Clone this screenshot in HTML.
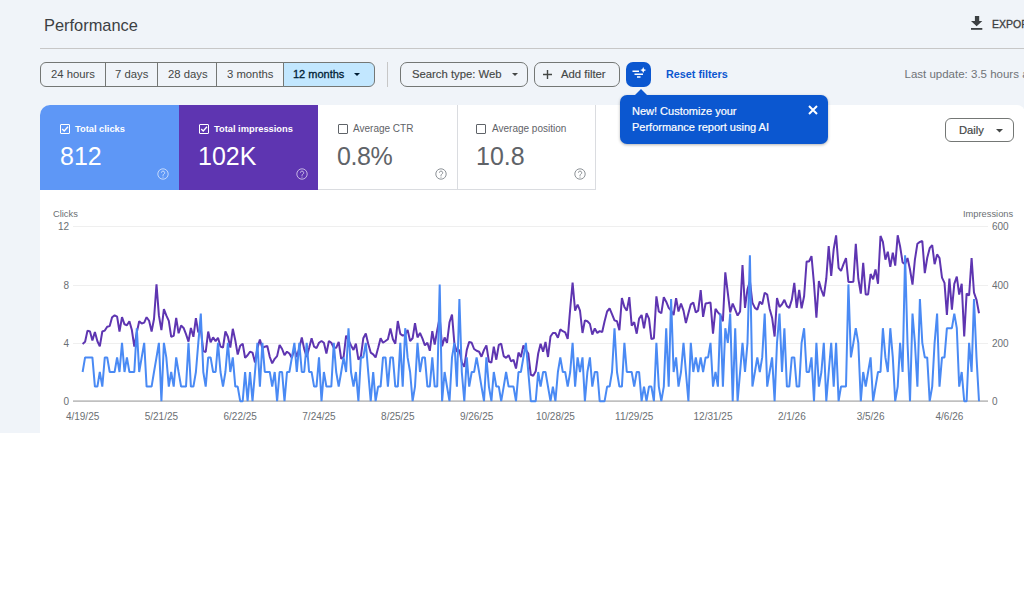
<!DOCTYPE html>
<html><head><meta charset="utf-8">
<style>
*{box-sizing:border-box;margin:0;padding:0}
html,body{width:1024px;height:589px;overflow:hidden;background:#fff;font-family:"Liberation Sans",sans-serif}
.abs{position:absolute}
#bg{position:absolute;left:0;top:0;width:1024px;height:433px;background:#f0f4f9}
#title{left:44px;top:14.5px;font-size:16.4px;color:#3c4043;line-height:20px;white-space:nowrap}
#hr{left:40px;top:48px;width:984px;height:1px;background:#c7c7c7}
#exp{left:992px;top:18.7px;font-size:10.5px;font-weight:normal;-webkit-text-stroke:0.3px #3c4043;color:#3c4043;letter-spacing:0px;white-space:nowrap;line-height:10px}
.seg{position:absolute;top:62px;height:25px;border:1px solid #747775;display:flex;align-items:center;padding-bottom:1px;font-size:11.3px;color:#444746;white-space:nowrap}
.btn{position:absolute;top:62px;height:25px;border:1px solid #747775;border-radius:7px;font-size:11.3px;color:#444746;-webkit-text-stroke:0.15px #444746;white-space:nowrap;line-height:23px}
#panel{left:40px;top:105px;width:985px;height:328px;background:#fff;border-radius:10px 8px 0 0}
.card{position:absolute;top:105px;height:85px;width:139px}
.card .lab{position:absolute;left:35px;top:18px;font-size:9.3px;font-weight:bold;white-space:nowrap;line-height:12px}
.card .val{position:absolute;left:19px;top:36px;font-size:25px;white-space:nowrap;line-height:30px}
.card .cb{position:absolute;left:20px;top:19px;width:10px;height:10px;border:1px solid #fff;border-radius:1px}
.card .help{position:absolute;left:117px;top:63px;width:12px;height:12px}
#tip{left:620px;top:95px;width:208px;height:49px;background:#0b57d0;border-radius:7px;box-shadow:0 1px 3px rgba(0,0,0,.3)}
#tiptext{left:632px;top:104px;font-size:11px;color:#fff;-webkit-text-stroke:0.2px #fff;line-height:15.5px;white-space:nowrap}
#daily{left:945px;top:117.5px;width:69px;height:24px;border:1px solid #747775;border-radius:6px;background:#fff;font-size:11.2px;color:#444746;-webkit-text-stroke:0.2px #444746;line-height:22px}
.ax{position:absolute;font-size:10px;color:#6b6f73;white-space:nowrap;line-height:10px}
</style></head><body>
<div id="bg"></div>
<div id="title" class="abs">Performance</div>
<div id="hr" class="abs"></div>
<svg class="abs" style="left:970px;top:15px" width="14" height="16" viewBox="0 0 14 16"><path d="M4.9 1h4.3v5h3.1L6.65 11.3 1 6h3.9z" fill="#3c4043"/><rect x="1" y="13" width="11.3" height="1.8" fill="#3c4043"/></svg>
<div id="exp" class="abs">EXPORT</div>

<div class="seg" style="left:40px;width:66px;border-radius:6px 0 0 6px;padding-left:10px">24 hours</div>
<div class="seg" style="left:105px;width:53px;border-left:1px solid #747775;padding-left:9px">7 days</div>
<div class="seg" style="left:157px;width:60px;padding-left:10px">28 days</div>
<div class="seg" style="left:216px;width:68px;padding-left:10px">3 months</div>
<div class="seg" style="left:283px;width:92px;border-radius:0 6px 6px 0;background:#c2e7ff;padding-left:9px;color:#001d35;font-size:11px;-webkit-text-stroke:0.3px #001d35">12 months<svg style="position:absolute;left:70px;top:10px" width="6" height="4"><path d="M0 0h6L3 3z" fill="#001d35"/></svg></div>
<div class="abs" style="left:387px;top:62px;width:1px;height:25px;background:#c7c7c7"></div>

<div class="btn" style="left:400px;width:128px;padding-left:11px">Search type: Web<svg style="position:absolute;left:111px;top:10px" width="6" height="4"><path d="M0 0h6L3 3z" fill="#444746"/></svg></div>
<div class="btn" style="left:534px;width:86px;padding-left:26px">Add filter<svg style="position:absolute;left:8px;top:7px" width="9" height="9"><path d="M3.8 0h1.4v3.8H9v1.4H5.2V9H3.8V5.2H0V3.8h3.8z" fill="#444746"/></svg></div>
<div class="abs" style="left:626px;top:62px;width:25px;height:25px;background:#0b57d0;border-radius:7px"><svg style="position:absolute;left:0;top:0" width="25" height="25" viewBox="0 0 25 25"><path d="M6.5 9.3h6.5M8.5 12.2h8.5M11 15.1h3.5" stroke="#fff" stroke-width="1.5"/><path d="M17.2 5.1l.95 2.05 2.05.95-2.05.95-.95 2.05-.95-2.05-2.05-.95 2.05-.95z" fill="#fff"/></svg></div>
<div class="abs" style="left:666px;top:68px;font-size:10.8px;font-weight:bold;color:#0b57d0;white-space:nowrap;line-height:13px">Reset filters</div>
<div class="abs" style="left:904.5px;top:66.5px;font-size:11.5px;color:#6f7377;white-space:nowrap;line-height:14px">Last update: 3.5 hours ago</div>

<div id="panel" class="abs"></div>
<div class="card" style="left:40px;background:#5e97f6;border-radius:10px 0 0 0;color:#fff">
 <div class="cb"><svg width="8" height="8" style="position:absolute;left:0;top:0"><path d="M1.2 4l2 2L7 1.8" stroke="#fff" stroke-width="1.3" fill="none"/></svg></div>
 <div class="lab">Total clicks</div><div class="val" style="left:20px">812</div>
 <svg class="help" viewBox="0 0 12 12"><circle cx="6" cy="6" r="5.2" stroke="rgba(255,255,255,.7)" fill="none" stroke-width="0.9"/><path d="M4.4 4.7a1.65 1.65 0 1 1 2.4 1.5c-.5.3-.8.6-.8 1.3v.5" stroke="rgba(255,255,255,.7)" fill="none" stroke-width="0.9"/><circle cx="6" cy="9.1" r=".55" fill="rgba(255,255,255,.7)"/></svg>
</div>
<div class="card" style="left:179px;background:#5e35b1;color:#fff">
 <div class="cb"><svg width="8" height="8" style="position:absolute;left:0;top:0"><path d="M1.2 4l2 2L7 1.8" stroke="#fff" stroke-width="1.3" fill="none"/></svg></div>
 <div class="lab">Total impressions</div><div class="val">102K</div>
 <svg class="help" viewBox="0 0 12 12"><circle cx="6" cy="6" r="5.2" stroke="rgba(255,255,255,.7)" fill="none" stroke-width="0.9"/><path d="M4.4 4.7a1.65 1.65 0 1 1 2.4 1.5c-.5.3-.8.6-.8 1.3v.5" stroke="rgba(255,255,255,.7)" fill="none" stroke-width="0.9"/><circle cx="6" cy="9.1" r=".55" fill="rgba(255,255,255,.7)"/></svg>
</div>
<div class="card" style="left:318px;border-bottom:1px solid #dadce0;color:#5f6368">
 <div class="cb" style="border-color:#5f6368"></div>
 <div class="lab" style="font-weight:normal;font-size:10px">Average CTR</div><div class="val" style="letter-spacing:-0.4px">0.8%</div>
 <svg class="help" viewBox="0 0 12 12"><circle cx="6" cy="6" r="5.2" stroke="#80868b" fill="none" stroke-width="0.9"/><path d="M4.4 4.7a1.65 1.65 0 1 1 2.4 1.5c-.5.3-.8.6-.8 1.3v.5" stroke="#80868b" fill="none" stroke-width="0.9"/><circle cx="6" cy="9.1" r=".55" fill="#80868b"/></svg>
</div>
<div class="card" style="left:457px;border-left:1px solid #dadce0;border-right:1px solid #dadce0;border-bottom:1px solid #dadce0;color:#5f6368">
 <div class="cb" style="border-color:#5f6368;left:18px"></div>
 <div class="lab" style="font-weight:normal;left:34px;font-size:10px">Average position</div><div class="val" style="left:18px">10.8</div>
 <svg class="help" viewBox="0 0 12 12" style="left:116px"><circle cx="6" cy="6" r="5.2" stroke="#80868b" fill="none" stroke-width="0.9"/><path d="M4.4 4.7a1.65 1.65 0 1 1 2.4 1.5c-.5.3-.8.6-.8 1.3v.5" stroke="#80868b" fill="none" stroke-width="0.9"/><circle cx="6" cy="9.1" r=".55" fill="#80868b"/></svg>
</div>

<div id="daily" class="abs"><span style="position:absolute;left:13px;top:0">Daily</span><svg style="position:absolute;left:50px;top:10px" width="7" height="4"><path d="M0 0h7L3.5 3.5z" fill="#444746"/></svg></div>

<div id="tip" class="abs"></div>
<svg class="abs" style="left:633px;top:89px" width="16" height="8"><path d="M0 8L8 0l8 8z" fill="#0b57d0"/></svg>
<div id="tiptext" class="abs">New! Customize your<br>Performance report using AI</div>
<svg class="abs" style="left:808px;top:105px" width="10" height="10"><path d="M1 1l8 8M9 1l-8 8" stroke="#fff" stroke-width="2"/></svg>

<svg class="abs" style="left:0;top:0" width="1024" height="589">
 <g stroke="#efefef" stroke-width="1">
  <line x1="73" y1="226.5" x2="988" y2="226.5"/>
  <line x1="73" y1="285.5" x2="988" y2="285.5"/>
  <line x1="73" y1="343.5" x2="988" y2="343.5"/>
 </g>
 <line x1="73" y1="401.1" x2="988" y2="401.1" stroke="#c0c0c0" stroke-width="1.6"/>
 <polyline points="82.6,343.9 85.1,341.8 87.5,330.6 90.0,331.5 92.4,340.4 94.9,332.0 97.4,341.3 99.8,346.3 102.3,331.5 104.8,330.6 107.2,326.7 109.7,326.1 112.1,317.2 114.6,315.4 117.1,316.7 119.5,331.5 122.0,317.2 124.5,324.3 126.9,325.2 129.4,321.3 131.8,329.7 134.3,346.6 136.8,332.4 139.2,321.3 141.7,323.5 144.2,322.6 146.6,317.2 149.1,320.8 151.6,331.5 154.0,319.0 156.5,284.3 158.9,315.4 161.4,330.2 163.9,309.2 166.3,315.4 168.8,320.8 171.2,336.8 173.7,335.9 176.2,317.8 178.6,333.3 181.1,325.6 183.6,327.9 186.0,334.1 188.5,341.6 190.9,327.9 193.4,336.8 195.9,318.1 198.3,332.4 200.8,328.8 203.3,351.1 205.7,352.0 208.2,331.5 210.6,342.2 213.1,337.4 215.6,341.3 218.0,337.7 220.5,346.6 223.0,347.5 225.4,331.5 227.9,336.8 230.3,347.5 232.8,328.8 235.3,340.4 237.7,354.6 240.2,345.7 242.7,343.7 245.1,357.9 247.6,355.2 250.0,351.7 252.5,352.6 255.0,362.4 257.4,348.1 259.9,339.6 262.4,348.1 264.8,346.7 267.3,346.0 269.8,357.0 272.2,363.3 274.7,358.8 277.1,356.1 279.6,344.9 282.1,349.0 284.5,355.2 287.0,351.7 289.4,353.5 291.9,357.9 294.4,348.1 296.8,357.0 299.3,348.1 301.8,337.4 304.2,349.0 306.7,357.0 309.1,348.1 311.6,338.3 314.1,346.7 316.5,348.1 319.0,342.8 321.5,341.0 323.9,342.8 326.4,353.5 328.9,341.0 331.3,342.8 333.8,347.8 336.2,347.8 338.7,341.9 341.2,358.8 343.6,357.0 346.1,335.6 348.5,340.1 351.0,345.4 353.5,349.9 355.9,343.7 358.4,359.7 360.9,356.1 363.3,338.3 365.8,333.5 368.2,343.7 370.7,352.6 373.2,354.3 375.6,357.4 378.1,348.1 380.6,338.3 383.0,342.8 385.5,341.0 387.9,339.2 390.4,328.5 392.9,339.2 395.3,343.7 397.8,321.0 400.3,333.9 402.7,335.6 405.2,334.7 407.6,329.9 410.1,341.0 412.6,338.3 415.0,323.2 417.5,337.4 420.0,333.0 422.4,338.3 424.9,345.4 427.4,342.8 429.8,350.8 432.3,331.2 434.7,344.5 437.2,330.3 439.7,317.8 442.1,346.3 444.6,337.4 447.0,342.8 449.5,322.3 452.0,314.6 454.4,343.7 456.9,351.7 459.4,349.9 461.8,362.4 464.3,366.8 466.8,349.9 469.2,341.9 471.7,342.8 474.1,349.0 476.6,350.8 479.1,351.7 481.5,356.7 484.0,349.9 486.4,345.4 488.9,361.5 491.4,362.7 493.8,346.7 496.3,359.7 498.8,344.9 501.2,343.7 503.7,356.1 506.1,357.9 508.6,355.2 511.1,361.5 513.5,359.7 516.0,368.6 518.5,352.6 520.9,357.0 523.4,345.4 525.9,349.9 528.3,353.5 530.8,374.8 533.2,375.7 535.7,371.3 538.2,353.5 540.6,343.7 543.1,351.7 545.5,341.9 548.0,357.0 550.5,336.5 552.9,333.0 555.4,333.0 557.9,337.8 560.3,329.4 562.8,331.2 565.2,332.4 567.7,338.8 570.2,308.9 572.6,282.5 575.1,310.7 577.6,304.5 580.0,310.7 582.5,333.0 584.9,320.4 587.4,321.3 589.9,323.9 592.3,334.6 594.8,328.4 597.3,332.9 599.7,331.1 602.2,332.0 604.6,321.3 607.1,311.5 609.6,308.4 612.0,314.1 614.5,320.4 617.0,321.3 619.4,330.2 621.9,298.1 624.4,307.0 626.8,310.6 629.3,297.2 631.7,325.7 634.2,322.2 636.7,333.7 639.1,318.6 641.6,315.0 644.0,328.4 646.5,313.3 649.0,318.6 651.4,339.1 653.9,338.2 656.4,296.3 658.8,311.5 661.3,313.3 663.8,297.2 666.2,301.7 668.7,307.9 671.1,310.6 673.6,315.0 676.1,298.1 678.5,311.5 681.0,303.5 683.5,310.6 685.9,323.1 688.4,313.3 690.8,304.3 693.3,302.6 695.8,312.4 698.2,310.6 700.7,290.1 703.1,316.8 705.6,303.5 708.1,303.1 710.5,302.6 713.0,333.7 715.5,308.8 717.9,312.4 720.4,315.0 722.9,321.3 725.3,272.3 727.8,292.8 730.2,312.4 732.7,303.5 735.2,309.7 737.6,315.6 740.1,311.5 742.5,265.1 745.0,307.9 747.5,289.2 749.9,281.2 752.4,302.6 754.9,307.9 757.3,309.6 759.8,301.6 762.2,304.3 764.7,292.7 767.2,294.5 769.6,308.7 772.1,317.7 774.6,336.5 777.0,298.1 779.5,307.0 782.0,304.3 784.4,299.8 786.9,306.1 789.3,307.9 791.8,299.8 794.3,282.9 796.7,307.9 799.2,290.0 801.6,308.4 804.1,296.3 806.6,261.5 809.0,261.5 811.5,256.2 814.0,283.8 816.4,317.7 818.9,281.1 821.4,290.0 823.8,296.3 826.3,278.5 828.7,246.0 831.2,275.8 833.7,249.1 836.1,235.3 838.6,267.8 841.0,271.0 843.5,264.2 846.0,258.0 848.4,282.0 850.9,282.0 853.4,281.7 855.8,243.7 858.3,278.5 860.8,293.6 863.2,262.8 865.7,294.5 868.1,294.5 870.6,274.0 873.1,279.3 875.5,269.5 878.0,283.8 880.5,236.0 882.9,241.9 885.4,259.7 887.8,251.7 890.3,266.9 892.8,252.6 895.2,265.6 897.7,235.3 900.1,246.4 902.6,262.4 905.1,264.2 907.5,258.0 910.0,269.5 912.5,284.7 914.9,259.7 917.4,243.7 919.9,241.9 922.3,241.0 924.8,273.1 927.2,258.0 929.7,248.2 932.2,245.0 934.6,264.2 937.1,254.4 939.5,258.0 942.0,277.6 944.5,282.9 946.9,315.0 949.4,278.5 951.9,309.6 954.3,283.8 956.8,276.7 959.2,294.5 961.7,283.8 964.2,336.5 966.6,293.6 969.1,295.4 971.6,258.0 974.0,292.7 976.5,299.8 979.0,313.2" fill="none" stroke="#5e35b1" stroke-width="2" stroke-linejoin="bevel"/>
 <polyline points="82.6,372.0 85.1,357.4 87.5,357.4 90.0,357.4 92.4,357.4 94.9,386.6 97.4,386.6 99.8,372.0 102.3,386.6 104.8,357.4 107.2,357.4 109.7,372.0 112.1,372.0 114.6,372.0 117.1,357.4 119.5,372.0 122.0,342.8 124.5,372.0 126.9,357.4 129.4,372.0 131.8,372.0 134.3,372.0 136.8,328.2 139.2,372.0 141.7,357.4 144.2,342.8 146.6,386.6 149.1,386.6 151.6,386.6 154.0,372.0 156.5,357.4 158.9,342.8 161.4,401.2 163.9,342.8 166.3,357.4 168.8,386.6 171.2,372.0 173.7,386.6 176.2,357.4 178.6,372.0 181.1,386.6 183.6,386.6 186.0,386.6 188.5,342.8 190.9,386.6 193.4,386.6 195.9,372.0 198.3,342.8 200.8,313.6 203.3,372.0 205.7,386.6 208.2,357.4 210.6,357.4 213.1,372.0 215.6,372.0 218.0,342.8 220.5,372.0 223.0,386.6 225.4,372.0 227.9,342.8 230.3,372.0 232.8,357.4 235.3,386.6 237.7,386.6 240.2,401.2 242.7,401.2 245.1,372.0 247.6,401.2 250.0,372.0 252.5,401.2 255.0,372.0 257.4,342.8 259.9,386.6 262.4,342.8 264.8,372.0 267.3,372.0 269.8,372.0 272.2,386.6 274.7,372.0 277.1,401.2 279.6,372.0 282.1,372.0 284.5,401.2 287.0,372.0 289.4,372.0 291.9,357.4 294.4,342.8 296.8,372.0 299.3,342.8 301.8,372.0 304.2,372.0 306.7,342.8 309.1,372.0 311.6,372.0 314.1,386.6 316.5,386.6 319.0,357.4 321.5,401.2 323.9,372.0 326.4,386.6 328.9,386.6 331.3,386.6 333.8,342.8 336.2,372.0 338.7,386.6 341.2,372.0 343.6,357.4 346.1,372.0 348.5,328.2 351.0,372.0 353.5,386.6 355.9,372.0 358.4,401.2 360.9,357.4 363.3,357.4 365.8,342.8 368.2,372.0 370.7,401.2 373.2,372.0 375.6,401.2 378.1,386.6 380.6,386.6 383.0,357.4 385.5,357.4 387.9,386.6 390.4,357.4 392.9,357.4 395.3,386.6 397.8,386.6 400.3,342.8 402.7,386.6 405.2,328.2 407.6,357.4 410.1,372.0 412.6,401.2 415.0,386.6 417.5,342.8 420.0,372.0 422.4,357.4 424.9,357.4 427.4,386.6 429.8,386.6 432.3,357.4 434.7,386.6 437.2,386.6 439.7,284.4 442.1,401.2 444.6,372.0 447.0,386.6 449.5,401.2 452.0,357.4 454.4,342.8 456.9,386.6 459.4,299.0 461.8,372.0 464.3,401.2 466.8,357.4 469.2,386.6 471.7,372.0 474.1,372.0 476.6,357.4 479.1,372.0 481.5,386.6 484.0,401.2 486.4,357.4 488.9,386.6 491.4,401.2 493.8,372.0 496.3,386.6 498.8,386.6 501.2,401.2 503.7,386.6 506.1,372.0 508.6,386.6 511.1,386.6 513.5,386.6 516.0,401.2 518.5,372.0 520.9,372.0 523.4,357.4 525.9,342.8 528.3,372.0 530.8,401.2 533.2,401.2 535.7,401.2 538.2,372.0 540.6,386.6 543.1,372.0 545.5,372.0 548.0,386.6 550.5,401.2 552.9,386.6 555.4,401.2 557.9,372.0 560.3,357.4 562.8,372.0 565.2,372.0 567.7,386.6 570.2,372.0 572.6,342.8 575.1,386.6 577.6,357.4 580.0,372.0 582.5,357.4 584.9,401.2 587.4,372.0 589.9,357.4 592.3,386.6 594.8,372.0 597.3,372.0 599.7,401.2 602.2,401.2 604.6,401.2 607.1,386.6 609.6,386.6 612.0,372.0 614.5,328.2 617.0,372.0 619.4,386.6 621.9,386.6 624.4,342.8 626.8,372.0 629.3,372.0 631.7,372.0 634.2,386.6 636.7,372.0 639.1,372.0 641.6,401.2 644.0,386.6 646.5,401.2 649.0,386.6 651.4,386.6 653.9,401.2 656.4,342.8 658.8,386.6 661.3,401.2 663.8,386.6 666.2,328.2 668.7,386.6 671.1,299.0 673.6,372.0 676.1,357.4 678.5,386.6 681.0,372.0 683.5,342.8 685.9,372.0 688.4,401.2 690.8,342.8 693.3,372.0 695.8,357.4 698.2,372.0 700.7,357.4 703.1,372.0 705.6,357.4 708.1,357.4 710.5,342.8 713.0,386.6 715.5,372.0 717.9,386.6 720.4,313.6 722.9,386.6 725.3,328.2 727.8,342.8 730.2,313.6 732.7,401.2 735.2,328.2 737.6,401.2 740.1,372.0 742.5,342.8 745.0,372.0 747.5,342.8 749.9,255.2 752.4,386.6 754.9,372.0 757.3,357.4 759.8,372.0 762.2,357.4 764.7,313.6 767.2,386.6 769.6,372.0 772.1,357.4 774.6,401.2 777.0,342.8 779.5,313.6 782.0,372.0 784.4,328.2 786.9,386.6 789.3,386.6 791.8,357.4 794.3,357.4 796.7,386.6 799.2,386.6 801.6,342.8 804.1,328.2 806.6,372.0 809.0,372.0 811.5,357.4 814.0,401.2 816.4,342.8 818.9,386.6 821.4,372.0 823.8,342.8 826.3,401.2 828.7,372.0 831.2,342.8 833.7,386.6 836.1,342.8 838.6,401.2 841.0,386.6 843.5,386.6 846.0,386.6 848.4,284.4 850.9,357.4 853.4,342.8 855.8,328.2 858.3,342.8 860.8,401.2 863.2,372.0 865.7,386.6 868.1,372.0 870.6,357.4 873.1,401.2 875.5,386.6 878.0,372.0 880.5,372.0 882.9,328.2 885.4,357.4 887.8,372.0 890.3,328.2 892.8,357.4 895.2,401.2 897.7,386.6 900.1,342.8 902.6,372.0 905.1,255.2 907.5,342.8 910.0,401.2 912.5,313.6 914.9,342.8 917.4,386.6 919.9,299.0 922.3,342.8 924.8,357.4 927.2,357.4 929.7,401.2 932.2,386.6 934.6,342.8 937.1,313.6 939.5,386.6 942.0,357.4 944.5,357.4 946.9,328.2 949.4,328.2 951.9,328.2 954.3,313.6 956.8,328.2 959.2,386.6 961.7,372.0 964.2,401.2 966.6,401.2 969.1,342.8 971.6,372.0 974.0,299.0 976.5,357.4 979.0,401.2" fill="none" stroke="#4a8af4" stroke-width="2" stroke-linejoin="bevel"/>
</svg>
<div class="ax" style="left:53px;top:209px;font-size:9.3px">Clicks</div>
<div class="ax" style="left:963px;top:209px;font-size:9.3px">Impressions</div>
<div class="ax" style="right:955px;top:222.0px;text-align:right">12</div>
<div class="ax" style="right:955px;top:281.0px;text-align:right">8</div>
<div class="ax" style="right:955px;top:339.0px;text-align:right">4</div>
<div class="ax" style="right:955px;top:397.0px;text-align:right">0</div>
<div class="ax" style="left:992px;top:222.0px">600</div>
<div class="ax" style="left:992px;top:281.0px">400</div>
<div class="ax" style="left:992px;top:339.0px">200</div>
<div class="ax" style="left:992px;top:397.0px">0</div>
<div class="ax" style="left:42.6px;width:80px;text-align:center;top:412px">4/19/25</div>
<div class="ax" style="left:121.4px;width:80px;text-align:center;top:412px">5/21/25</div>
<div class="ax" style="left:200.2px;width:80px;text-align:center;top:412px">6/22/25</div>
<div class="ax" style="left:279.0px;width:80px;text-align:center;top:412px">7/24/25</div>
<div class="ax" style="left:357.8px;width:80px;text-align:center;top:412px">8/25/25</div>
<div class="ax" style="left:436.6px;width:80px;text-align:center;top:412px">9/26/25</div>
<div class="ax" style="left:515.4px;width:80px;text-align:center;top:412px">10/28/25</div>
<div class="ax" style="left:594.2px;width:80px;text-align:center;top:412px">11/29/25</div>
<div class="ax" style="left:673.0px;width:80px;text-align:center;top:412px">12/31/25</div>
<div class="ax" style="left:751.8px;width:80px;text-align:center;top:412px">2/1/26</div>
<div class="ax" style="left:830.6px;width:80px;text-align:center;top:412px">3/5/26</div>
<div class="ax" style="left:909.4px;width:80px;text-align:center;top:412px">4/6/26</div>
</body></html>
